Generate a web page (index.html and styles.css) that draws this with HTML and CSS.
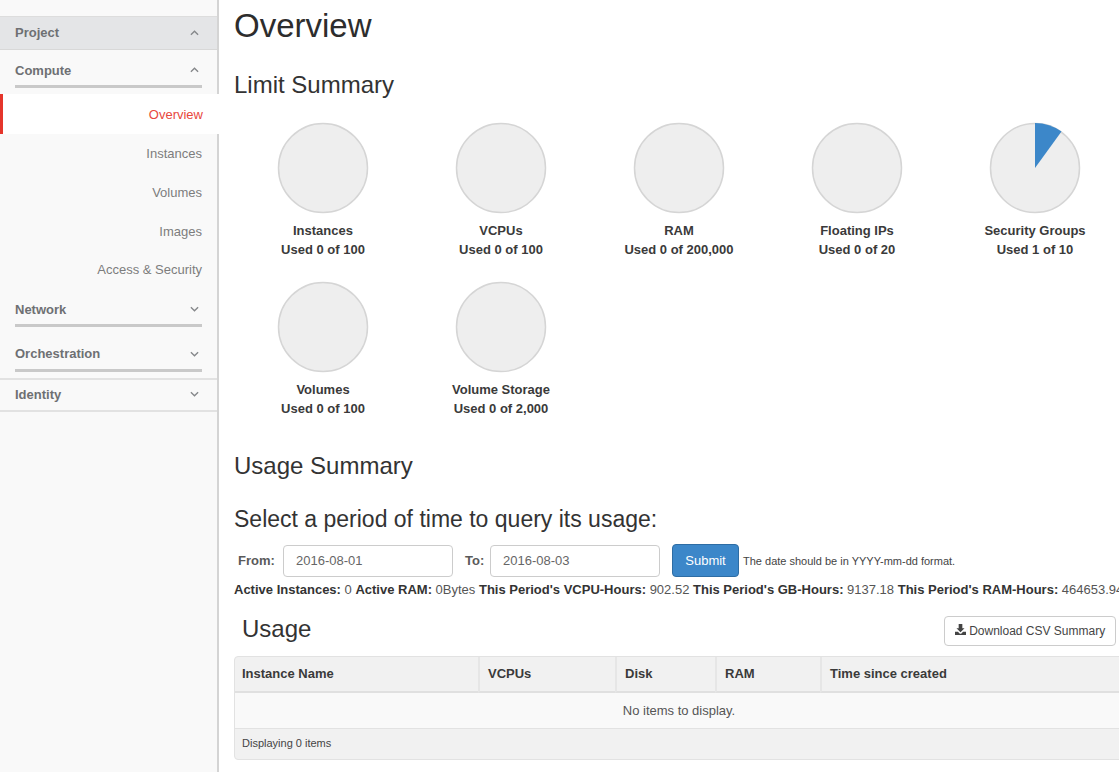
FILE: index.html
```html
<!DOCTYPE html>
<html>
	<head>
		<meta charset="UTF-8">
		<title>Overview</title>
		<link rel="stylesheet" href="styles.css">
	</head>
	<body>
		<div class="page">
			<!--sidebar-->
			<div class="sidebar">
				<div class="side-top"></div>
				<div class="dash-head">
					<span>Project</span>
					<svg class="chev" viewBox="0 0 10 6"><polyline points="1,5 5,1 9,5"/></svg>
				</div>
				<div class="group group-open">
					<div class="group-title">
						<span>Compute</span>
						<svg class="chev" viewBox="0 0 10 6"><polyline points="1,5 5,1 9,5"/></svg>
					</div>
				</div>
				<a class="side-link side-link-active" href="javascript:;">Overview</a>
				<a class="side-link" href="javascript:;">Instances</a>
				<a class="side-link" href="javascript:;">Volumes</a>
				<a class="side-link" href="javascript:;">Images</a>
				<a class="side-link" href="javascript:;">Access &amp; Security</a>
				<div class="group">
					<div class="group-title">
						<span>Network</span>
						<svg class="chev" viewBox="0 0 10 6"><polyline points="1,1 5,5 9,1"/></svg>
					</div>
				</div>
				<div class="group">
					<div class="group-title">
						<span>Orchestration</span>
						<svg class="chev" viewBox="0 0 10 6"><polyline points="1,1 5,5 9,1"/></svg>
					</div>
				</div>
				<div class="dash-plain">
					<span>Identity</span>
					<svg class="chev" viewBox="0 0 10 6"><polyline points="1,1 5,5 9,1"/></svg>
				</div>
			</div>

			<!--main content-->
			<div class="main">
				<h1 class="page-title">Overview</h1>
				<h2 class="section-title">Limit Summary</h2>

				<div class="pies">
					<div class="pie">
						<svg class="pie-chart" viewBox="0 0 92 92"><circle cx="46" cy="46" r="44.5"/></svg>
						<div class="pie-name">Instances</div>
						<div class="pie-used">Used 0 of 100</div>
					</div>
					<div class="pie">
						<svg class="pie-chart" viewBox="0 0 92 92"><circle cx="46" cy="46" r="44.5"/></svg>
						<div class="pie-name">VCPUs</div>
						<div class="pie-used">Used 0 of 100</div>
					</div>
					<div class="pie">
						<svg class="pie-chart" viewBox="0 0 92 92"><circle cx="46" cy="46" r="44.5"/></svg>
						<div class="pie-name">RAM</div>
						<div class="pie-used">Used 0 of 200,000</div>
					</div>
					<div class="pie">
						<svg class="pie-chart" viewBox="0 0 92 92"><circle cx="46" cy="46" r="44.5"/></svg>
						<div class="pie-name">Floating IPs</div>
						<div class="pie-used">Used 0 of 20</div>
					</div>
					<div class="pie">
						<svg class="pie-chart" viewBox="0 0 92 92">
							<circle cx="46" cy="46" r="44.5"/>
							<path class="pie-slice" d="M46 46 L46 1 A45 45 0 0 1 72.5 9.6 Z"/>
						</svg>
						<div class="pie-name">Security Groups</div>
						<div class="pie-used">Used 1 of 10</div>
					</div>
					<div class="pie">
						<svg class="pie-chart" viewBox="0 0 92 92"><circle cx="46" cy="46" r="44.5"/></svg>
						<div class="pie-name">Volumes</div>
						<div class="pie-used">Used 0 of 100</div>
					</div>
					<div class="pie">
						<svg class="pie-chart" viewBox="0 0 92 92"><circle cx="46" cy="46" r="44.5"/></svg>
						<div class="pie-name">Volume Storage</div>
						<div class="pie-used">Used 0 of 2,000</div>
					</div>
				</div>

				<h2 class="section-title usage-summary">Usage Summary</h2>
				<h3 class="period-title">Select a period of time to query its usage:</h3>

				<div class="date-form">
					<label class="date-label">From:</label>
					<input class="date-input" type="text" value="2016-08-01">
					<label class="date-label date-label-to">To:</label>
					<input class="date-input" type="text" value="2016-08-03">
					<button class="btn-submit" type="button">Submit</button>
					<span class="date-hint">The date should be in YYYY-mm-dd format.</span>
				</div>

				<p class="stats"><b>Active Instances:</b> 0 <b>Active RAM:</b> 0Bytes <b>This Period's VCPU-Hours:</b> 902.52 <b>This Period's GB-Hours:</b> 9137.18 <b>This Period's RAM-Hours:</b> 464653.94</p>

				<div class="usage-head">
					<h3 class="usage-title">Usage</h3>
					<button class="btn-download" type="button">
						<svg class="download-icon" viewBox="0 0 12 12"><path d="M4 0h4v4.5h2.4L6 9 1.600 4.500H4z"/><path d="M0 8.500h3.200L5 10.300c.6.500 1.400.500 2 0l1.800-1.800H12V12H0z"/></svg>
						Download CSV Summary
					</button>
				</div>

				<table class="usage-table">
					<colgroup>
						<col class="col-name">
						<col class="col-vcpu">
						<col class="col-disk">
						<col class="col-ram">
						<col>
					</colgroup>
					<thead>
						<tr>
							<th>Instance Name</th>
							<th>VCPUs</th>
							<th>Disk</th>
							<th>RAM</th>
							<th>Time since created</th>
						</tr>
					</thead>
					<tbody>
						<tr><td class="empty" colspan="5">No items to display.</td></tr>
					</tbody>
					<tfoot>
						<tr><td class="table-foot" colspan="5">Displaying 0 items</td></tr>
					</tfoot>
				</table>
			</div>
		</div>
	</body>
</html>
```

FILE: styles.css
```css
*{
	margin: 0;
	padding: 0;
	box-sizing: border-box;
}
html, body{
	height: 100%;
	overflow: hidden;
	background-color: #fff;
}
body{
	font-family: "Liberation Sans", Arial, sans-serif;
	font-size: 13px;
	color: #333;
}
.page{
	display: flex;
	height: 772px;
	width: 1160px;
}

/*sidebar*/
.sidebar{
	width: 219px;
	flex: none;
	background-color: #f9f9f9;
	border-right: 2px solid #d4d4d4;
}
.side-top{
	height: 17px;
	border-bottom: 1px solid #ddd;
}
.dash-head{
	display: flex;
	justify-content: space-between;
	align-items: center;
	height: 33px;
	padding: 0 15px 1px;
	background-color: #e4e5e7;
	border-bottom: 1px solid #d8d8d8;
	font-weight: bold;
	color: #6e7073;
}
.dash-plain{
	display: flex;
	justify-content: space-between;
	align-items: center;
	height: 34px;
	padding: 0 15px 2px;
	border-top: 2px solid #e2e2e2;
	border-bottom: 2px solid #e2e2e2;
	font-weight: bold;
	color: #6e7073;
}
.group{
	padding: 0 15px;
	height: 44.500px;
}
.group-open{
	height: 44px;
}
.group-title{
	display: flex;
	justify-content: space-between;
	align-items: center;
	height: 38px;
	padding-top: 5px;
	border-bottom: 3px solid #c9c9c9;
	font-weight: bold;
	color: #6e7073;
}
.chev{
	width: 9px;
	height: 6px;
	margin-right: 3px;
	fill: none;
	stroke: #85878a;
	stroke-width: 1.5;
}
.side-link{
	display: block;
	height: 38.750px;
	line-height: 39px;
	padding-right: 15px;
	text-align: right;
	text-decoration: none;
	color: #7d7d7d;
}
.side-link-active{
	position: relative;
	width: 219px;
	height: 40px;
	line-height: 41px;
	padding-right: 16px;
	background-color: #fff;
	border-left: 3px solid #e5352b;
	color: #e8473d;
}

/*main*/
.main{
	flex: 1;
	padding-left: 15px;
}
.page-title{
	font-size: 33px;
	font-weight: normal;
	line-height: 52px;
	color: #2d2d2d;
}
.section-title{
	font-size: 24px;
	font-weight: normal;
	line-height: 30px;
	margin-top: 18px;
	color: #333;
}
.pies{
	display: grid;
	grid-template-columns: repeat(5, 178px);
	grid-auto-rows: 159px;
	margin-top: 22px;
}
.pie{
	text-align: center;
	font-weight: bold;
	line-height: 19px;
	color: #3a3a3a;
}
.pie-chart{
	display: block;
	width: 92px;
	height: 92px;
	margin: 0 auto 7px;
}
.pie-chart circle{
	fill: #eee;
	stroke: #d5d5d5;
	stroke-width: 1.500;
}
.pie-slice{
	fill: #3c87c9;
}
.usage-summary{
	margin-top: 11px;
}
.period-title{
	font-size: 23px;
	font-weight: normal;
	line-height: 30px;
	margin-top: 23px;
	color: #333;
}
.date-form{
	display: flex;
	align-items: center;
	margin-top: 10px;
	height: 33px;
}
.date-label{
	font-weight: bold;
	color: #5a5a5a;
	padding-left: 4px;
	width: 49px;
}
.date-label-to{
	width: 37px;
	padding-left: 12px;
}
.date-input{
	width: 170px;
	height: 32px;
	padding: 0 12px;
	border: 1px solid #ccc;
	border-radius: 4px;
	font-family: inherit;
	font-size: 13px;
	color: #666;
	background-color: #fff;
}
.btn-submit{
	width: 67px;
	height: 33px;
	margin-left: 12px;
	border: 1px solid #2e6da4;
	border-radius: 4px;
	background-color: #3c87c9;
	color: #fff;
	font-family: inherit;
	font-size: 13px;
}
.date-hint{
	margin-left: 4px;
	font-size: 11px;
	color: #444;
}
.stats{
	margin-top: 5px;
	line-height: 16px;
	white-space: nowrap;
	color: #555;
}
.stats b{
	color: #333;
}
.usage-head{
	display: flex;
	justify-content: space-between;
	align-items: flex-start;
	width: 882px;
	height: 31px;
	margin-top: 18px;
	padding-left: 8px;
}
.usage-title{
	font-size: 24px;
	font-weight: normal;
	line-height: 26px;
	color: #333;
}
.btn-download{
	width: 172px;
	height: 30px;
	border: 1px solid #ccc;
	border-radius: 4px;
	background-color: #fff;
	font-family: inherit;
	font-size: 12px;
	color: #444;
}
.download-icon{
	width: 11px;
	height: 11px;
	fill: #444;
}
.usage-table{
	width: 890px;
	margin-top: 9px;
	border-collapse: separate;
	border-spacing: 0;
	table-layout: fixed;
	border: 1px solid #e2e2e2;
	border-radius: 4px;
	background-color: #f1f1f1;
}
.col-name{
	width: 243px;
}
.col-vcpu{
	width: 137px;
}
.col-disk{
	width: 100px;
}
.col-ram{
	width: 105px;
}
.usage-table th{
	height: 36px;
	padding: 0 8px 2px;
	text-align: left;
	color: #3a3a3a;
	border-left: 2px solid #e6e6e6;
	border-bottom: 2px solid #e0e0e0;
}
.usage-table th:first-child{
	padding-left: 7px;
	border-left: 0;
}
.empty{
	height: 36px;
	text-align: center;
	background-color: #f9f9f9;
	border-bottom: 1px solid #e2e2e2;
	color: #555;
}
.table-foot{
	height: 30px;
	padding: 0 7px 2px;
	font-size: 11px;
	color: #444;
}
```
